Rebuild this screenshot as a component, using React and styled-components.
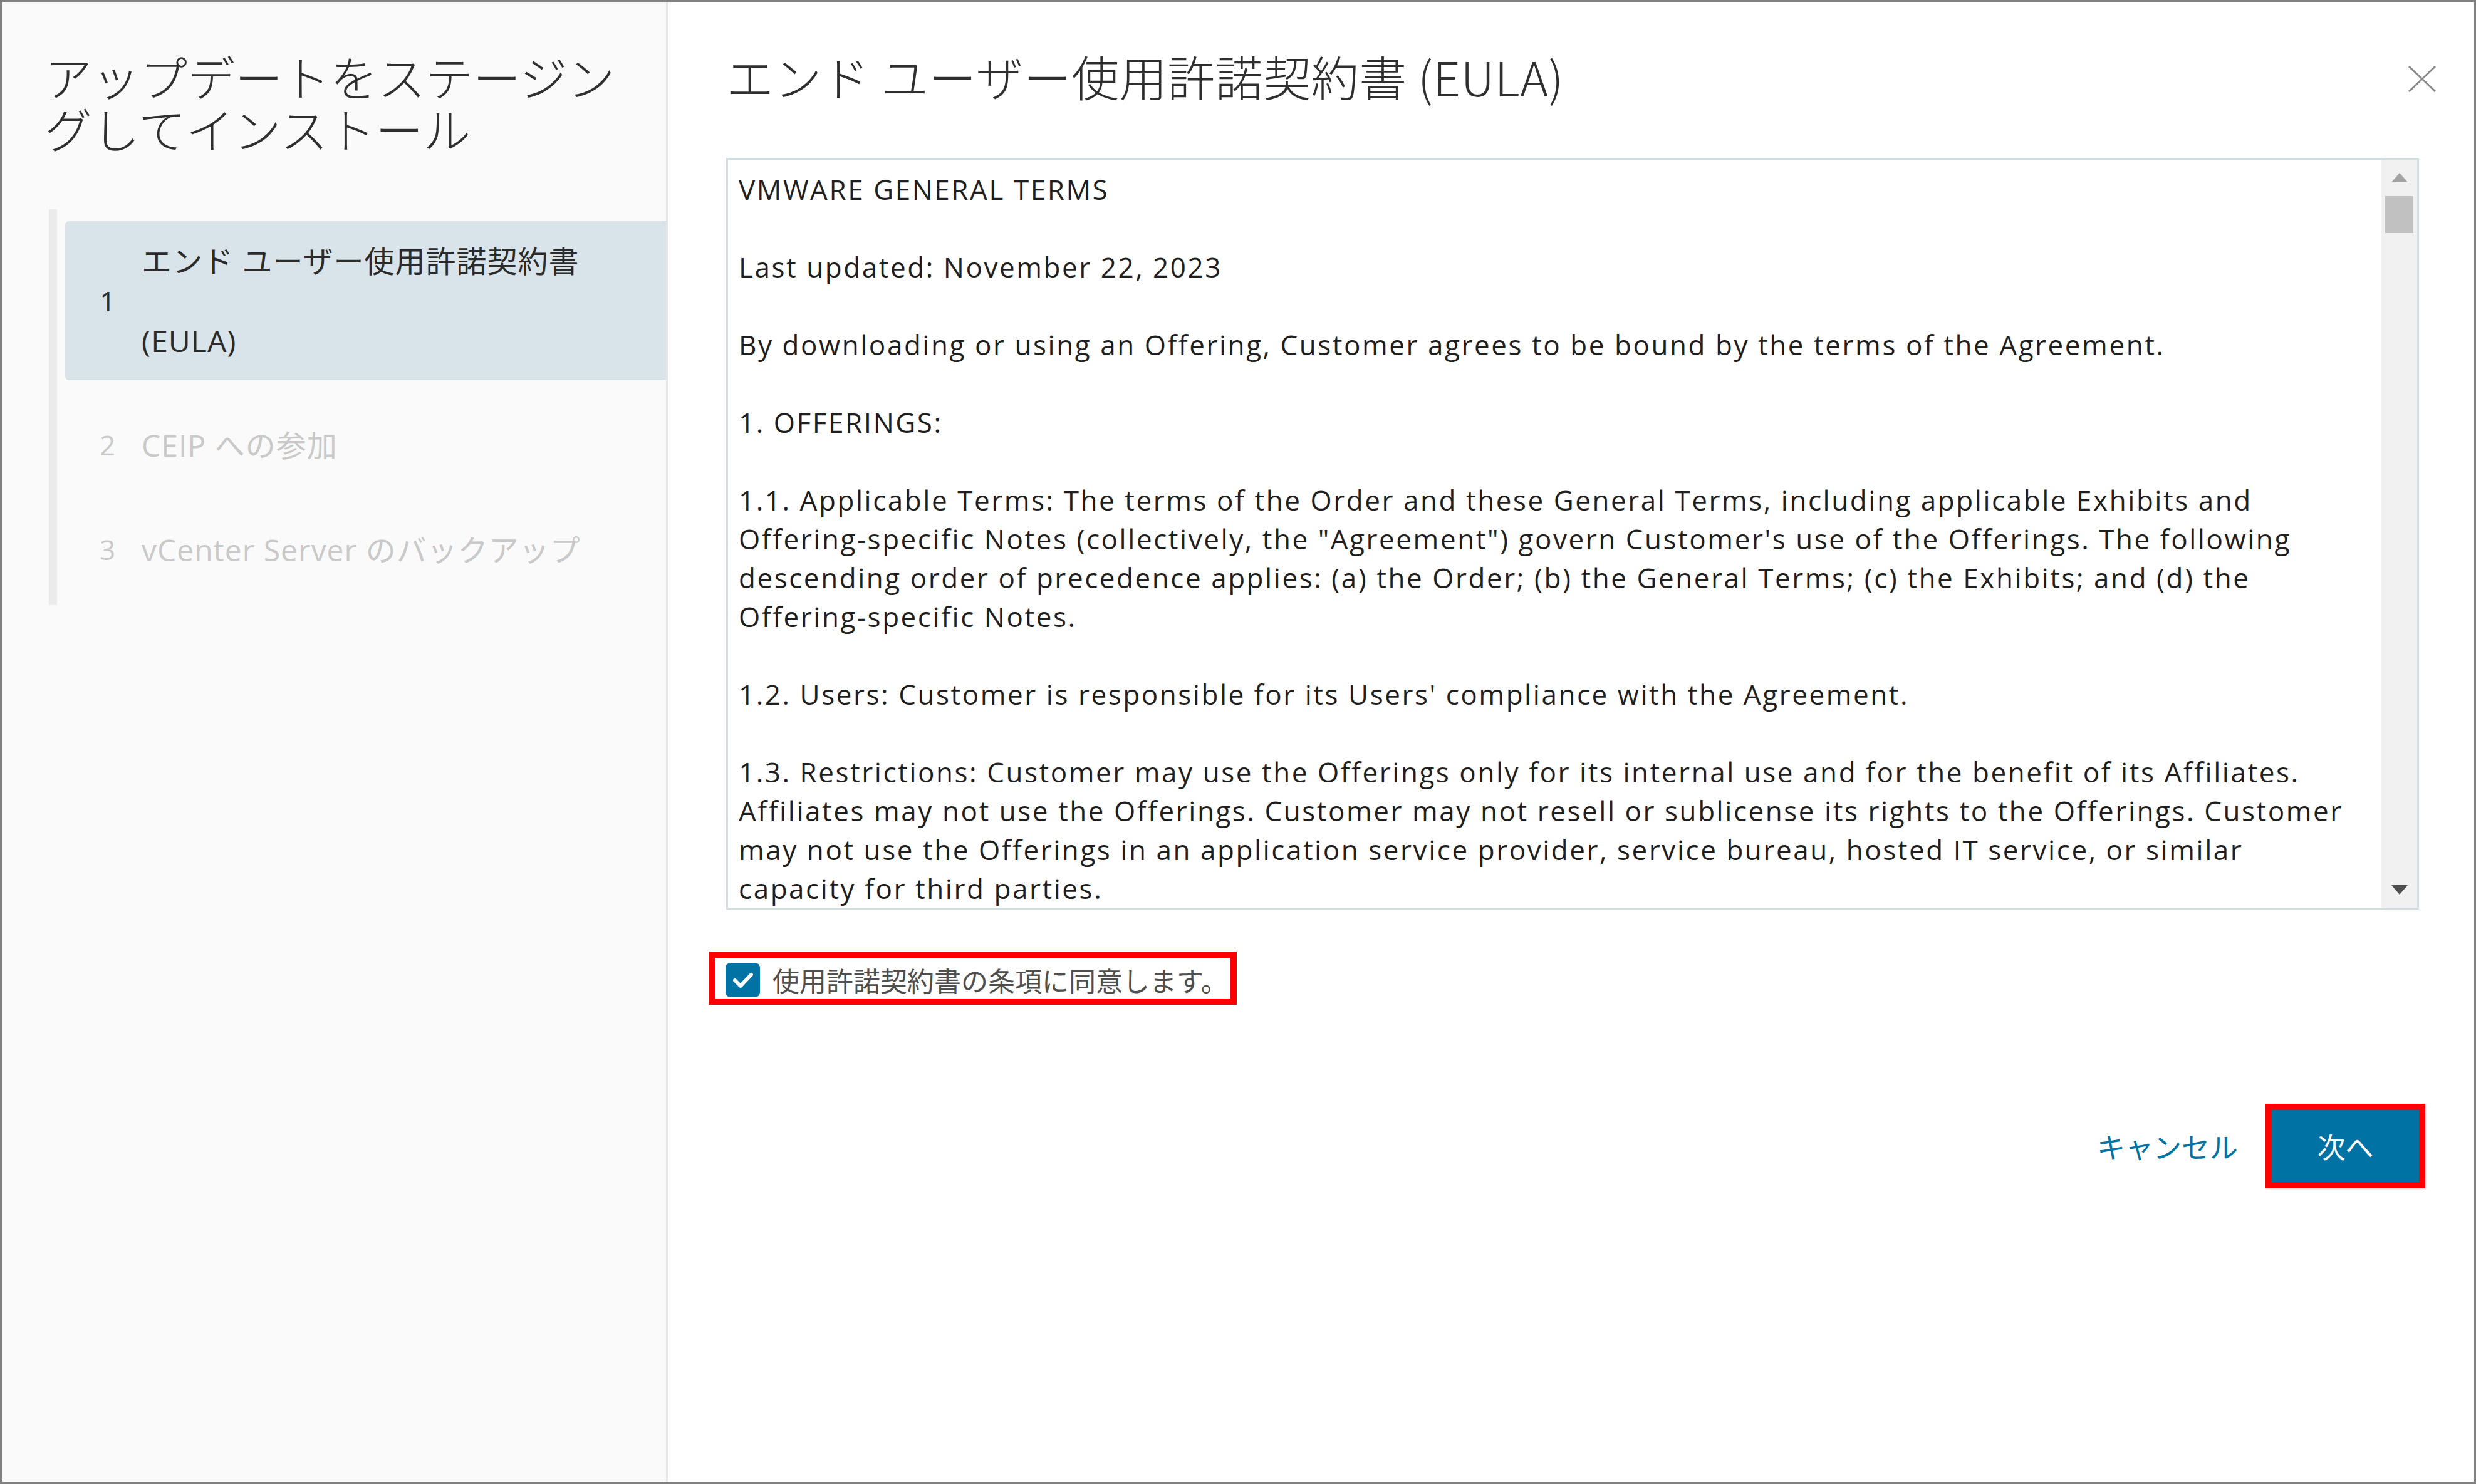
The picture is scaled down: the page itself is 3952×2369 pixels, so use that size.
import React from "react";
import styled, { createGlobalStyle } from "styled-components";

const GlobalStyle = createGlobalStyle`
  html, body {
    margin: 0;
    padding: 0;
    background: #ffffff;
  }
  body {
    font-family: "Open Sans", "Noto Sans CJK JP", sans-serif;
  }
  * {
    box-sizing: border-box;
  }
`;

const Frame = styled.div`
  width: 3952px;
  height: 2369px;
  border: 3px solid #808080;
  display: flex;
  background: #ffffff;
  overflow: hidden;
`;

const Sidebar = styled.aside`
  width: 1063px;
  flex-shrink: 0;
  background: #fafafa;
  border-right: 3px solid #e6e6e6;
  padding: 77px 0 0 68px;
`;

const WizardTitle = styled.h1`
  margin: 0;
  font-family: "Noto Sans CJK JP", sans-serif;
  font-weight: 300;
  font-size: 76px;
  line-height: 83px;
  color: #2f2f2f;
  white-space: nowrap;
`;

const Stepper = styled.nav`
  margin-top: 88px;
  margin-left: 7px;
  border-left: 13px solid #ebebeb;
  padding: 19px 0 25px 13px;
  display: flex;
  flex-direction: column;
  gap: 40px;
`;

const Step = styled.div`
  display: flex;
  align-items: center;
  padding-left: 55px;
  border-radius: 6px 0 0 6px;
  background: ${(p) => (p.$active ? "#d9e4ea" : "transparent")};
  color: ${(p) => (p.$active ? "#2b2b2b" : "#c9c9c9")};
  font-size: 48px;
  line-height: 127px;
`;

const StepNum = styled.span`
  width: 67px;
  flex-shrink: 0;
  font-size: 44px;
`;

const StepLabel = styled.span`
  white-space: nowrap;
  letter-spacing: 1px;
`;

const Main = styled.main`
  flex: 1;
  padding: 77px 88px 0 93px;
  display: flex;
  flex-direction: column;
`;

const Header = styled.div`
  display: flex;
  align-items: center;
  justify-content: space-between;
  margin-bottom: 89px;
`;

const ModalTitle = styled.h2`
  margin: 0;
  font-family: "Noto Sans CJK JP", sans-serif;
  font-weight: 300;
  font-size: 76px;
  line-height: 83px;
  color: #2f2f2f;
  white-space: nowrap;
  letter-spacing: 0.5px;
`;

const CloseButton = styled.button`
  border: 0;
  background: none;
  padding: 0;
  margin-right: -28px;
  margin-top: 8px;
  display: flex;
`;

const EulaBox = styled.div`
  height: 1200px;
  border: 3px solid #d3dce1;
  display: flex;
`;

const EulaText = styled.div`
  flex: 1;
  overflow: hidden;
  padding: 16px 0 0 17px;
  font-size: 44px;
  letter-spacing: 2.55px;
  line-height: 62px;
  color: #1f1f1f;
`;

const Para = styled.p`
  margin: 0 0 62px;
  white-space: nowrap;
`;

const ScrollTrack = styled.div`
  width: 57px;
  flex-shrink: 0;
  background: #f1f1f1;
  display: flex;
  flex-direction: column;
  align-items: center;
`;

const ScrollArrow = styled.div`
  height: 57px;
  width: 100%;
  display: flex;
  align-items: center;
  justify-content: center;
`;

const ScrollThumb = styled.div`
  width: 45px;
  height: 59px;
  margin-top: 1px;
  background: #c1c1c1;
`;

const Spacer = styled.div`
  flex: 1;
`;

const AgreeRow = styled.div`
  margin-top: 67px;
  margin-left: -28px;
  align-self: flex-start;
  border: 10px solid #ff0000;
  padding: 8px 4px 2px 17px;
  display: flex;
  align-items: center;
  gap: 20px;
`;

const CheckBox = styled.span`
  width: 55px;
  height: 55px;
  border-radius: 8px;
  background: #0072a3;
  display: flex;
  align-items: center;
  justify-content: center;
  flex-shrink: 0;
`;

const AgreeLabel = styled.span`
  font-family: "Noto Sans CJK JP", sans-serif;
  font-size: 43px;
  line-height: 55px;
  color: #4f4f4f;
  white-space: nowrap;
`;

const Footer = styled.div`
  margin-top: 168px;
  display: flex;
  justify-content: flex-end;
  align-items: center;
`;

const LinkButton = styled.button`
  border: 0;
  background: none;
  padding: 0;
  margin-right: 54px;
  font-family: "Noto Sans CJK JP", sans-serif;
  font-size: 45px;
  color: #0072a3;
`;

const PrimaryButton = styled.button`
  width: 235px;
  height: 115px;
  border: 0;
  background: #0072a3;
  color: #ffffff;
  font-family: "Noto Sans CJK JP", sans-serif;
  font-size: 45px;
  outline: 10px solid #ff0000;
`;

const steps = [
  { n: 1, label: ["エンド ユーザー使用許諾契約書", "(EULA)"], active: true },
  { n: 2, label: ["CEIP への参加"] },
  { n: 3, label: ["vCenter Server のバックアップ"] },
];

const eula = [
  ["VMWARE GENERAL TERMS"],
  ["Last updated: November 22, 2023"],
  ["By downloading or using an Offering, Customer agrees to be bound by the terms of the Agreement."],
  ["1. OFFERINGS:"],
  [
    "1.1. Applicable Terms: The terms of the Order and these General Terms, including applicable Exhibits and",
    "Offering-specific Notes (collectively, the \"Agreement\") govern Customer's use of the Offerings. The following",
    "descending order of precedence applies: (a) the Order; (b) the General Terms; (c) the Exhibits; and (d) the",
    "Offering-specific Notes.",
  ],
  ["1.2. Users: Customer is responsible for its Users' compliance with the Agreement."],
  [
    "1.3. Restrictions: Customer may use the Offerings only for its internal use and for the benefit of its Affiliates.",
    "Affiliates may not use the Offerings. Customer may not resell or sublicense its rights to the Offerings. Customer",
    "may not use the Offerings in an application service provider, service bureau, hosted IT service, or similar",
    "capacity for third parties.",
  ],
  [
    "1.4. Evaluations: Evaluations are for 30 days (unless VMware specifies otherwise in writing). Customer may not",
    "have access to data in the Evaluation after it ends.",
  ],
];

function Lines({ lines }) {
  return lines.map((l, i) => (
    <React.Fragment key={i}>
      {i > 0 && <br />}
      {l}
    </React.Fragment>
  ));
}

export default function App() {
  return (
    <>
      <GlobalStyle />
      <Frame>
        <Sidebar>
          <WizardTitle>
            アップデートをステージン
            <br />
            グしてインストール
          </WizardTitle>
          <Stepper>
            {steps.map((s) => (
              <Step key={s.n} $active={s.active}>
                <StepNum>{s.n}</StepNum>
                <StepLabel>
                  <Lines lines={s.label} />
                </StepLabel>
              </Step>
            ))}
          </Stepper>
        </Sidebar>
        <Main>
          <Header>
            <ModalTitle>エンド ユーザー使用許諾契約書 (EULA)</ModalTitle>
            <CloseButton aria-label="閉じる">
              <svg width="46" height="42" viewBox="0 0 46 42">
                <path d="M2 1 L44 41 M44 1 L2 41" stroke="#8a8a8a" strokeWidth="3" fill="none" />
              </svg>
            </CloseButton>
          </Header>
          <EulaBox>
            <EulaText>
              {eula.map((p, i) => (
                <Para key={i}>
                  <Lines lines={p} />
                </Para>
              ))}
            </EulaText>
            <ScrollTrack>
              <ScrollArrow>
                <svg width="26" height="15" viewBox="0 0 26 15">
                  <polygon points="13,0 26,15 0,15" fill="#a3a3a3" />
                </svg>
              </ScrollArrow>
              <ScrollThumb />
              <Spacer />
              <ScrollArrow>
                <svg width="26" height="15" viewBox="0 0 26 15">
                  <polygon points="0,0 26,0 13,15" fill="#505050" />
                </svg>
              </ScrollArrow>
            </ScrollTrack>
          </EulaBox>
          <AgreeRow>
            <CheckBox>
              <svg width="32" height="26" viewBox="0 0 32 26">
                <path d="M3 13 L12 22 L29 4" stroke="#ffffff" strokeWidth="6" fill="none" strokeLinecap="round" strokeLinejoin="round" />
              </svg>
            </CheckBox>
            <AgreeLabel>使用許諾契約書の条項に同意します。</AgreeLabel>
          </AgreeRow>
          <Footer>
            <LinkButton>キャンセル</LinkButton>
            <PrimaryButton>次へ</PrimaryButton>
          </Footer>
        </Main>
      </Frame>
    </>
  );
}
